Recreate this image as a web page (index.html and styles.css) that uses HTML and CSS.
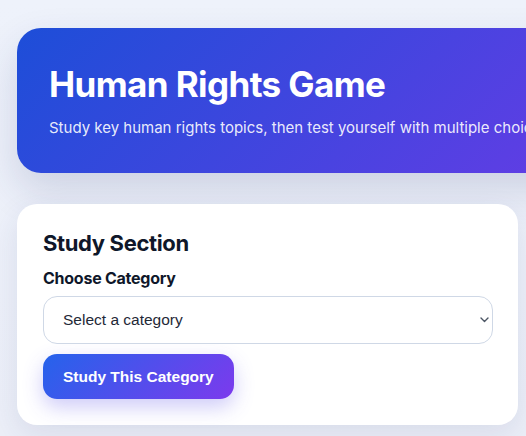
FILE: index.html
```html
<!DOCTYPE html>
<html lang="en">
<head>
<meta charset="utf-8">
<title>Human Rights Game</title>
<link rel="stylesheet" href="styles.css">
</head>
<body>
<main class="page">
  <header class="hero">
    <h1 class="hero-title">Human Rights Game</h1>
    <p class="hero-sub">Study key human rights topics, then test yourself with multiple choice questions.</p>
  </header>
  <section class="card">
    <h2 class="card-title">Study Section</h2>
    <label class="field-label" for="cat">Choose Category</label>
    <div class="select-wrap">
      <select id="cat" class="select">
        <option>Select a category</option>
        <option>Civil and Political Rights</option>
        <option>Economic and Social Rights</option>
      </select>
      <svg class="chev" width="9" height="6" viewBox="0 0 9 6" aria-hidden="true"><path d="M1 1l3.5 3.5L8 1" fill="none" stroke="#4b5563" stroke-width="1.4" stroke-linecap="round" stroke-linejoin="round"/></svg>
    </div>
    <button class="btn" type="button">Study This Category</button>
  </section>
</main>
</body>
</html>
```
FILE: styles.css
```css
html, body {
  margin: 0;
  padding: 0;
  overflow: hidden;
}
body {
  background: linear-gradient(180deg, #eef2fb 0%, #eceff8 100%);
  font-family: Inter, "Noto Sans", sans-serif;
  color: #0f172a;
  min-height: 436px;
}
.page {
  padding: 28px 8px 0 17px;
  display: flex;
  flex-direction: column;
  gap: 31px;
}
.hero {
  width: max-content;
  box-sizing: border-box;
  padding: 34px 32px 33px 32px;
  border-radius: 24px;
  background: linear-gradient(135deg, #1d4ed8 0%, #6a3be6 100%);
  color: #fff;
  box-shadow: 0 18px 40px rgba(40, 50, 110, 0.16);
}
.hero-title {
  margin: 0;
  font-size: 35px;
  line-height: 42px;
  font-weight: 700;
  letter-spacing: -0.6px;
  padding-top: 1px;
}
.hero-sub {
  margin: 12px 0 0;
  font-size: 15px;
  line-height: 22.5px;
  color: rgba(255, 255, 255, 0.9);
  white-space: nowrap;
}
.card {
  background: #fff;
  border-radius: 20px;
  padding: 26px 25px 26px 26px;
  box-shadow: 0 10px 30px rgba(40, 50, 110, 0.1);
  display: flex;
  flex-direction: column;
  align-items: flex-start;
}
.card-title {
  margin: 0;
  font-size: 22px;
  line-height: 26.4px;
  font-weight: 700;
  letter-spacing: -0.35px;
  color: #0f172a;
}
.field-label {
  margin-top: 13.5px;
  font-size: 16px;
  line-height: 19.2px;
  font-weight: 700;
  letter-spacing: -0.25px;
  color: #0f172a;
}
.select-wrap {
  position: relative;
  align-self: stretch;
  margin-top: 7px;
}
.select {
  appearance: none;
  -webkit-appearance: none;
  width: 100%;
  height: 48px;
  box-sizing: border-box;
  border: 1px solid #cfd8e6;
  border-radius: 14px;
  background: #fff;
  padding: 0 32px 0 19px;
  font-family: "Liberation Sans", Arial, sans-serif;
  font-size: 15.5px;
  color: #1f2937;
}
.chev {
  position: absolute;
  right: 4px;
  top: 21px;
}
.btn {
  margin-top: 10px;
  border: 0;
  border-radius: 14px;
  padding: 13px 20px;
  background: linear-gradient(135deg, #2563eb 0%, #7c3aed 100%);
  color: #fff;
  font-family: "Liberation Sans", Arial, sans-serif;
  font-weight: 700;
  font-size: 15.5px;
  line-height: 19px;
  box-shadow: 0 8px 20px rgba(79, 70, 229, 0.28);
  cursor: pointer;
}
```
